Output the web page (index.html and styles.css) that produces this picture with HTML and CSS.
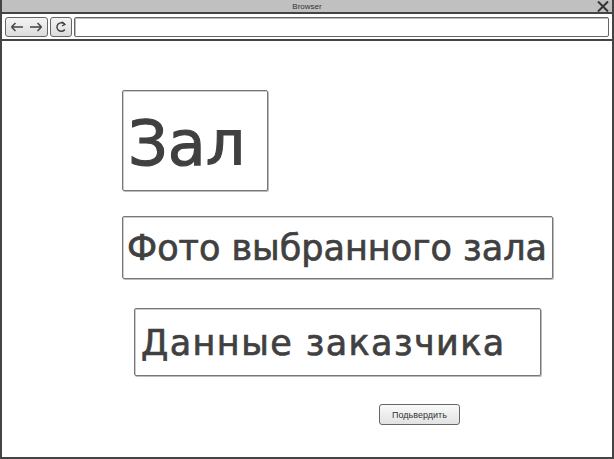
FILE: index.html
```html
<!DOCTYPE html>
<html>
<head>
<meta charset="utf-8">
<link rel="stylesheet" href="styles.css">
</head>
<body>
<div class="window">
  <div class="titlebar">
    <span class="title">Browser</span>
    <svg class="close" width="12" height="11" viewBox="0 0 12 11"><path d="M1 0.5 L11 10.5 M11 0.5 L1 10.5" stroke="#333" stroke-width="2"/></svg>
  </div>
  <div class="toolbar">
    <div class="btn nav">
      <svg width="14" height="12" viewBox="0 0 14 12"><path d="M1.5 6 H13 M1.5 6 L5.5 2 M1.5 6 L5.5 10" fill="none" stroke="#444" stroke-width="1.5"/></svg>
      <svg width="14" height="12" viewBox="0 0 14 12"><path d="M1 6 H12.5 M12.5 6 L8.5 2 M12.5 6 L8.5 10" fill="none" stroke="#444" stroke-width="1.5"/></svg>
    </div>
    <div class="btn reload">
      <svg width="12" height="12" viewBox="0 0 12 12"><path d="M9.5 3.2 A4.3 4.3 0 1 0 9.8 8.5" fill="none" stroke="#444" stroke-width="1.5"/><path d="M6.8 0.8 L10 3.4 L7 5" fill="none" stroke="#444" stroke-width="1.3"/></svg>
    </div>
    <div class="url"></div>
  </div>
  <div class="content">
    <div class="box hall">Зал</div>
    <div class="box photo">Фото выбранного зала</div>
    <div class="box client">Данные заказчика</div>
    <div class="submit-row"><div class="submit">Подьвердить</div></div>
  </div>
</div>
</body>
</html>
```
FILE: styles.css
```css
* { box-sizing: border-box; }
html, body { margin: 0; padding: 0; background: #fff; }
body { font-family: "DejaVu Sans", "Noto Sans", sans-serif; color: #404040; }
.window {
  width: 614px;
  height: 459px;
  border: 2px solid #444;
  border-top: none;
  display: flex;
  flex-direction: column;
  overflow: hidden;
}
.titlebar {
  height: 14px;
  background: #c0c0c0;
  position: relative;
  display: flex;
  align-items: center;
  justify-content: center;
  border-bottom: 2px solid #444;
}
.title {
  font-family: "Liberation Sans", sans-serif;
  font-size: 8px;
  color: #333;
}
.close { position: absolute; right: 3px; top: 1px; }
.toolbar {
  height: 27px;
  display: flex;
  align-items: center;
  gap: 2px;
  padding: 0 3px 0 3px;
  border-bottom: 2px solid #444;
  background: #fff;
}
.btn {
  height: 20px;
  border: 1.5px solid #666;
  border-radius: 3px;
  background: linear-gradient(#f4f4f4, #dcdcdc);
  display: flex;
  align-items: center;
  justify-content: center;
}
.nav { width: 43px; gap: 5px; }
.reload { width: 22px; }
.url {
  flex: 1;
  height: 20px;
  border: 1.5px solid #666;
  border-radius: 2px;
  background: #fff;
  box-shadow: inset 1px 1px 0 #bbb;
}
.content {
  flex: 1;
  display: flex;
  flex-direction: column;
  align-items: flex-start;
  padding-top: 49px;
}
.box {
  border: 1.5px solid #777;
  border-radius: 2px;
  box-shadow: inset 1px 1px 0 #ccc, 1px 1px 0 #bbb;
  background: #fff;
  white-space: nowrap;
  display: flex;
  align-items: center;
  -webkit-text-stroke: 0.7px #404040;
}
.hall {
  margin-left: 120px;
  width: 146px;
  height: 101px;
  font-size: 62px;
  padding-left: 5px;
  padding-top: 6px;
  -webkit-text-stroke: 1.1px #404040;
}
.photo {
  margin-left: 120px;
  margin-top: 25px;
  width: 431px;
  height: 63px;
  font-size: 35px;
  padding-left: 4px;
}
.client {
  margin-left: 132px;
  margin-top: 29px;
  width: 407px;
  height: 68px;
  font-size: 35px;
  letter-spacing: 1.4px;
  padding-left: 6px;
  padding-top: 2px;
}
.submit-row {
  margin-left: 377px;
  margin-top: 28px;
}
.submit {
  width: 81px;
  height: 21px;
  border: 1.5px solid #666;
  border-radius: 3px;
  background: linear-gradient(#fafafa, #e2e2e2);
  font-family: "Liberation Sans", sans-serif;
  font-size: 9px;
  color: #333;
  display: flex;
  align-items: center;
  justify-content: center;
}
```
